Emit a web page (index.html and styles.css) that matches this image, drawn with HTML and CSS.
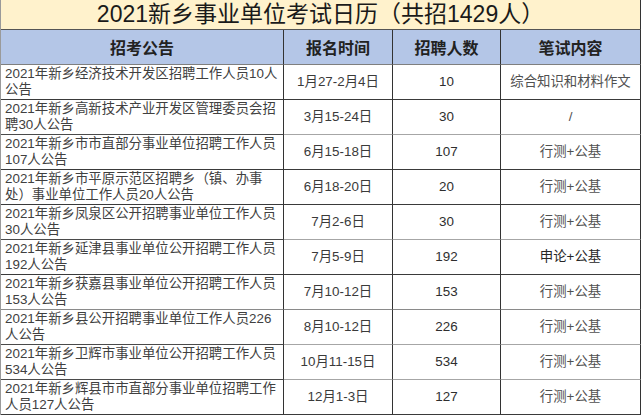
FILE: index.html
```html
<!DOCTYPE html>
<html lang="zh">
<head>
<meta charset="utf-8">
<link rel="stylesheet" href="styles.css">
</head>
<body>
<table class="cal">
  <colgroup>
    <col class="w1"><col class="w2"><col class="w3"><col class="w4">
  </colgroup>
  <thead>
    <tr class="title"><th colspan="4">2021新乡事业单位考试日历（共招1429人）</th></tr>
    <tr class="head"><th>招考公告</th><th>报名时间</th><th>招聘人数</th><th>笔试内容</th></tr>
  </thead>
  <tbody>
    <tr class="dk"><td class="name">2021年新乡经济技术开发区招聘工作人员10人<br>公告</td><td>1月27-2月4日</td><td class="num">10</td><td class="sub">综合知识和材料作文</td></tr>
    <tr><td class="name">2021年新乡高新技术产业开发区管理委员会招<br>聘30人公告</td><td>3月15-24日</td><td class="num">30</td><td class="sub">/</td></tr>
    <tr class="dk"><td class="name">2021年新乡市市直部分事业单位招聘工作人员<br>107人公告</td><td>6月15-18日</td><td class="num">107</td><td class="sub">行测+公基</td></tr>
    <tr class="dk"><td class="name">2021年新乡市平原示范区招聘乡（镇、办事<br>处）事业单位工作人员20人公告</td><td>6月18-20日</td><td class="num">20</td><td class="sub">行测+公基</td></tr>
    <tr><td class="name">2021年新乡凤泉区公开招聘事业单位工作人员<br>30人公告</td><td>7月2-6日</td><td class="num">30</td><td class="sub">行测+公基</td></tr>
    <tr class="dk"><td class="name">2021年新乡延津县事业单位公开招聘工作人员<br>192人公告</td><td>7月5-9日</td><td class="num">192</td><td class="sub strong">申论+公基</td></tr>
    <tr class="md"><td class="name">2021年新乡获嘉县事业单位公开招聘工作人员<br>153人公告</td><td>7月10-12日</td><td class="num">153</td><td class="sub">行测+公基</td></tr>
    <tr><td class="name">2021年新乡县公开招聘事业单位工作人员226<br>人公告</td><td>8月10-12日</td><td class="num">226</td><td class="sub">行测+公基</td></tr>
    <tr><td class="name">2021年新乡卫辉市事业单位公开招聘工作人员<br>534人公告</td><td>10月11-15日</td><td class="num">534</td><td class="sub">行测+公基</td></tr>
    <tr class="dk"><td class="name">2021年新乡辉县市市直部分事业单位招聘工作<br>人员127人公告</td><td>12月1-3日</td><td class="num">127</td><td class="sub">行测+公基</td></tr>
  </tbody>
</table>
</body>
</html>
```
FILE: styles.css
```css
html, body {
  margin: 0;
  padding: 0;
  background: #ffffff;
}
.cal {
  border-collapse: separate;
  border-spacing: 0;
  table-layout: fixed;
  width: 640px;
  font-family: "Liberation Sans", "Noto Sans CJK SC", sans-serif;
  color: #3a3a3a;
  border-left: 1px solid #9a9a9a;
}
.w1 { width: 283px; }
.w2 { width: 109px; }
.w3 { width: 108px; }
.w4 { width: 140px; }

.title th {
  height: 29px;
  padding: 0;
  background: #fff2cc;
  color: #1a1a1a;
  font-weight: normal;
  font-size: 23px;
  line-height: 29px;
  text-align: center;
  border-right: 1px solid #333333;
  border-bottom: 1px solid #555555;
}
.head th {
  height: 34px;
  padding: 0;
  background: #b4c6e7;
  color: #222222;
  font-weight: bold;
  font-size: 16px;
  text-align: center;
  border-right: 1px solid #333333;
  border-bottom: 1px solid #7f7f7f;
}
td {
  height: 34px;
  padding: 0;
  font-size: 13.4px;
  line-height: 16px;
  text-align: center;
  vertical-align: middle;
  white-space: nowrap;
  border-right: 1px solid #333333;
  border-bottom: 1px solid #a6a6a6;
}
td.name {
  text-align: left;
  padding-left: 4px;
  border-bottom-color: #4a4a4a;
  color: #404040;
}
tr.dk td { border-bottom-color: #3a3a3a; }
tr.md td { border-bottom-color: #8a8a8a; }
td.num { color: #2e2e2e; }
td.sub { color: #505050; }
td.sub.strong { color: #262626; }
```
